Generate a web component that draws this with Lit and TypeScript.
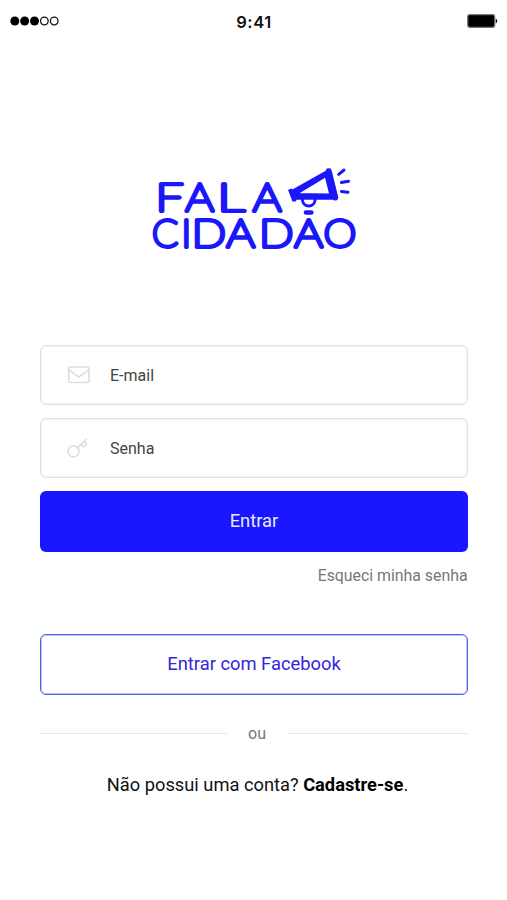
import { LitElement, html, svg, css } from "lit";
import { customElement } from "lit/decorators.js";

@customElement("status-bar")
class StatusBar extends LitElement {
  static styles = css`
    :host { display: flex; justify-content: space-between; align-items: center; height: 42px; padding: 0 9px 0 10px; }
    .side { width: 60px; display: flex; }
    .end { justify-content: flex-end; }
    .time { font: 600 16.5px/42px Inter, sans-serif; letter-spacing: 0.6px; color: #111; padding-top: 1px; }
    svg { display: block; }
  `;
  render() {
    return html`
      <div class="side">
        <svg width="50" height="12" viewBox="0 0 50 12">
          ${[0, 1, 2].map((i) => svg`<circle cx=${4.8 + i * 9.85} cy="6" r="4.5" fill="#000" />`)}
          ${[3, 4].map((i) => svg`<circle cx=${4.8 + i * 9.85} cy="6" r="3.8" fill="none" stroke="#111" stroke-width="1.3" />`)}
        </svg>
      </div>
      <div class="time">9:41</div>
      <div class="side end">
        <svg width="31" height="14" viewBox="0 0 31 14">
          <rect x="0.7" y="0.7" width="27" height="12.6" rx="2" fill="#000" stroke="#777" stroke-width="1.2" />
          <path d="M28.7 4.7c2 .4 2 4.2 0 4.6z" fill="#111" />
        </svg>
      </div>
    `;
  }
}

type Letter = [char: string, x: number, advance: number];

const TOP: Letter[] = [["F", 155.5, 28], ["A", 185.4, 28.3], ["L", 217.2, 27.5], ["A", 252.9, 28.3]];
const BOTTOM: Letter[] = [
  ["C", 152.1, 26.2], ["I", 181.2, 10.1], ["D", 191.7, 34.2], ["A", 226.5, 28.3],
  ["D", 258.9, 34.5], ["A", 294.5, 28.3], ["O", 323.6, 32.8],
];

@customElement("brand-logo")
class BrandLogo extends LitElement {
  static styles = css`
    :host { display: block; }
    svg { display: block; overflow: visible; }
    .word { font-family: Lato, sans-serif; font-weight: 100; font-size: 38.6px; fill: #1a17fb; stroke: #1a17fb; stroke-width: 3.9; stroke-linejoin: round; }
    .line { fill: none; stroke: #1a17fb; stroke-linecap: round; stroke-linejoin: round; }
    .horn { fill: #1a17fb; fill-rule: evenodd; stroke: #1a17fb; stroke-width: 1.6; stroke-linejoin: round; }
  `;
  private word(letters: Letter[], y: number) {
    return svg`<text class="word" y=${y}>${letters.map(
      ([char, x, advance]) => svg`<tspan x=${x} textLength=${advance} lengthAdjust="spacingAndGlyphs">${char}</tspan>`
    )}</text>`;
  }
  render() {
    return html`
      <svg width="212" height="90" viewBox="148 164 212 90">
        ${this.word(TOP, 210.8)}
        ${this.word(BOTTOM, 246.9)}
        <path class="horn" d="M289 190.2L291.3 189.4L292.3 190.5L326.6 171.3L327 169.3L330 169L331 171.2L337.5 197.5L336.8 199.5L334.5 199.8L333.5 198.6L296 199L295.3 200.6L293 200.8ZM297 193.8L330 194.2L325.6 176.6Z" />
        <path class="line" stroke-width="3" d="M302.3 199.5C303 208 314.5 208 315.2 199.5" />
        <path class="line" stroke-width="4.6" d="M306 212.5H311.3" />
        <path class="line" stroke-width="3" d="M338.7 174.3L344 170M341.4 182.6L348.5 181.3M341.5 191.4L348 192.3" />
      </svg>
    `;
  }
}

@customElement("app-root")
class AppRoot extends LitElement {
  static styles = css`
    :host { display: block; height: 900px; background: #fff; font-family: Roboto, sans-serif; color: #111; overflow: hidden; }
    .logo { display: flex; justify-content: center; margin-top: 122px; padding-left: 1px; }
    .form { margin: 91px 39px 0 40px; display: flex; flex-direction: column; gap: 13px; }
    .field, .button { box-sizing: border-box; border-radius: 6px; display: flex; align-items: center; }
    .field { height: 60px; border: 1px solid #e2e2e2; box-shadow: inset 0 0 0 1px #f3f3f3; padding-left: 26px; gap: 19px; font-size: 16px; color: #444; }
    .field span { padding-top: 1px; }
    .field svg { display: block; fill: none; stroke: #dedede; stroke-width: 1.6; stroke-linejoin: round; stroke-linecap: round; }
    .button { height: 61px; justify-content: center; font-size: 18.35px; padding-bottom: 2px; }
    .primary { background: #1a17ff; color: #e8e8ff; }
    .outline { margin: 48px 39px 0 40px; border: 1px solid #4a63e4; box-shadow: inset 0 0 0 1px #bdc7f7; color: #3426dc; }
    .forgot { margin: 13px 39.5px 0; text-align: right; font-size: 15.85px; line-height: 21px; color: #777; }
    .divider { margin: 27px 39px 0 40px; display: flex; align-items: center; font-size: 16px; line-height: 22px; color: #777; }
    .divider span { position: relative; top: 1px; }
    .divider::before, .divider::after { content: ""; height: 1px; background: #e9e9e9; }
    .divider::before { width: 187px; margin-right: 21px; }
    .divider::after { flex: 1; margin-left: 22px; }
    .signup { margin-top: 29px; padding-left: 8px; text-align: center; font-size: 18.3px; line-height: 24px; }
    b { font-weight: 700; color: #000; }
  `;
  render() {
    return html`
      <status-bar></status-bar>
      <div class="logo"><brand-logo></brand-logo></div>
      <div class="form">
        <div class="field">
          <svg width="24" height="22" viewBox="0 0 24 22"><rect x="1.7" y="3" width="20.3" height="15.5" rx="1.2" /><path d="M2 6.2L11.8 13L21.7 6.2" /></svg>
          <span>E-mail</span>
        </div>
        <div class="field">
          <svg width="24" height="24" viewBox="0 0 24 24"><circle cx="6.5" cy="15.3" r="5.6" /><path d="M10.7 11.5L19.5 3M14 8.3L16.7 11L19.8 8L17 5.3" /></svg>
          <span>Senha</span>
        </div>
        <div class="button primary">Entrar</div>
      </div>
      <div class="forgot">Esqueci minha senha</div>
      <div class="button outline">Entrar com Facebook</div>
      <div class="divider"><span>ou</span></div>
      <div class="signup">Não possui uma conta? <b>Cadastre-se</b>.</div>
    `;
  }
}
